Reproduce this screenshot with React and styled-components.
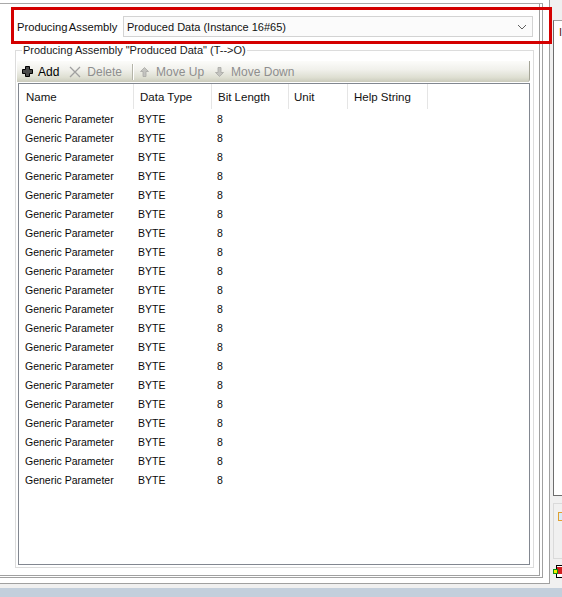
import React from "react";
import styled, { createGlobalStyle } from "styled-components";

const GlobalStyle = createGlobalStyle`
  html, body { margin: 0; padding: 0; background: #ffffff; }
  body { font-family: "Liberation Sans", Arial, sans-serif; color: #000; }
  * { box-sizing: border-box; }
`;

const Screen = styled.div`
  position: relative;
  width: 562px;
  height: 597px;
  overflow: hidden;
  display: flex;
  flex-direction: column;
  background: #fff;
`;

const Workspace = styled.div`
  display: flex;
  height: 588px;
  background: #f0f0f0;
`;

const OuterFrame = styled.div`
  width: 550px;
  height: 584px;
  background: #fff;
  border-right: 1px solid #a0a0a0;
  border-bottom: 1px solid #a0a0a0;
  padding: 3px 6px 5px 0;
`;

const MiddleFrame = styled.div`
  height: 100%;
  border-top: 1px solid #a9a9a9;
  border-right: 1px solid #a0a0a0;
  border-bottom: 1px solid #a0a0a0;
  padding: 0 2px 1px 0;
`;

const InnerFrame = styled.div`
  height: 100%;
  border-right: 1px solid #a0a0a0;
  border-bottom: 1px solid #a0a0a0;
  display: flex;
  flex-direction: column;
`;

const TopRow = styled.div`
  display: flex;
  align-items: center;
  height: 21px;
  margin-top: 12px;
  padding: 0 6px 0 17px;
`;

const FieldLabel = styled.div`
  width: 106px;
  flex: none;
  font-size: 11.2px;
  word-spacing: -1px;
  color: #111;
  white-space: nowrap;
`;

const Combo = styled.div`
  flex: 1;
  height: 21px;
  display: flex;
  align-items: center;
  justify-content: space-between;
  border: 1px solid #d3d3d3;
  background: #fbfbfb;
  padding: 0 5px 0 3px;
  font-size: 11px;
  color: #111;
`;

const GroupBox = styled.div`
  flex: 1;
  margin: 13px 5px 7px 15px;
  border: 1px solid #dcdcdc;
  display: flex;
  flex-direction: column;
  padding: 0 3px 2px 1px;
`;

const Legend = styled.div`
  align-self: flex-start;
  margin: -8px 0 0 5px;
  padding: 0 1px;
  background: #fff;
  font-size: 11px;
  line-height: 15px;
  color: #1a1a1a;
  white-space: nowrap;
`;

const Toolbar = styled.div`
  margin-top: 3px;
  height: 21px;
  display: flex;
  align-items: center;
  padding-left: 5px;
  background: linear-gradient(#fcfcfa 0%, #f1f1ec 40%, #dedfd2 78%, #cbcbbc 100%);
  border-right: 1px solid #a4a497;
  border-bottom-right-radius: 3px;
  font-size: 12px;
`;

const ToolButton = styled.div`
  display: flex;
  align-items: center;
  gap: ${(p) => p.$gap}px;
  margin-right: ${(p) => p.$after}px;
  color: ${(p) => (p.$disabled ? "#8e8e8e" : "#000")};
  white-space: nowrap;
`;

const ToolSeparator = styled.div`
  width: 1px;
  height: 16px;
  background: #b4b4a8;
  box-shadow: 1px 0 0 #ffffff;
  margin-right: 7px;
`;

const List = styled.div`
  flex: 1;
  margin: 1px 0 0 1px;
  border: 1px solid #828790;
  background: #fff;
  display: flex;
  flex-direction: column;
`;

const columns = "115px 78px 77px 59px 80px";

const HeaderRow = styled.div`
  display: grid;
  grid-template-columns: ${columns};
  height: 25px;
`;

const HeaderCell = styled.div`
  display: flex;
  align-items: center;
  padding-left: ${(p) => p.$pad}px;
  border-right: 1px solid #e5e5e5;
  font-size: 11.5px;
  color: #111;
  white-space: nowrap;
`;

const Row = styled.div`
  display: grid;
  grid-template-columns: ${columns};
  height: 19px;
`;

const Cell = styled.div`
  display: flex;
  align-items: center;
  padding-left: ${(p) => p.$pad}px;
  font-size: 10.5px;
  color: #0a0a0a;
  white-space: nowrap;
`;

const SideStrip = styled.div`
  width: 12px;
  padding-left: 3px;
  display: flex;
  flex-direction: column;
`;

const SidePanel = styled.div`
  margin-top: 20px;
  height: 476px;
  background: #fff;
  border-left: 1px solid #6d6d6d;
  border-top: 1px solid #a0a0a0;
  border-bottom: 1px solid #6d6d6d;
  overflow: hidden;
  padding: 5px 0 0 5px;
  font-size: 11px;
  color: #5a1a00;
`;

const SideBox = styled.div`
  margin-top: 7px;
  height: 56px;
  background: #f0f0f0;
  border: 1px solid #dadada;
  border-right: none;
  padding: 3px 0 0 4px;
  overflow: hidden;
`;

const SideIcon = styled.div`
  margin-top: 6px;
  overflow: hidden;
`;

const StatusBand = styled.div`
  height: 9px;
  background: #c3cfdc;
`;

const Highlight = styled.div`
  position: absolute;
  left: 11px;
  top: 7px;
  width: 541px;
  height: 37px;
  border: 3px solid #d40000;
  pointer-events: none;
`;

const PlusIcon = () => (
  <svg width="11" height="11" viewBox="0 0 11 11">
    <path
      d="M3.5 0.5h4v3h3v4h-3v3h-4v-3h-3v-4h3z"
      fill="#4a4a4a"
      stroke="#000"
      strokeWidth="1"
    />
  </svg>
);

const CrossIcon = () => (
  <svg width="12" height="12" viewBox="0 0 12 12">
    <path d="M1 1L11 11M11 1L1 11" stroke="#a0a0a0" strokeWidth="1.3" fill="none" />
  </svg>
);

const UpIcon = () => (
  <svg width="9" height="10" viewBox="0 0 9 10">
    <path d="M4.5 0.5L8.5 4.5H6V9.5H3V4.5H0.5Z" fill="#c4c4c0" stroke="#a8a8a4" strokeWidth="0.8" />
  </svg>
);

const DownIcon = () => (
  <svg width="9" height="10" viewBox="0 0 9 10">
    <path d="M4.5 9.5L8.5 5.5H6V0.5H3V5.5H0.5Z" fill="#c4c4c0" stroke="#a8a8a4" strokeWidth="0.8" />
  </svg>
);

const Chevron = () => (
  <svg width="10" height="6" viewBox="0 0 10 6">
    <path d="M1 1L5 5L9 1" stroke="#606060" strokeWidth="1" fill="none" />
  </svg>
);

const rows = Array.from({ length: 20 }, () => ({
  name: "Generic Parameter",
  type: "BYTE",
  bits: "8",
}));

export default function App() {
  return (
    <>
      <GlobalStyle />
      <Screen>
        <Workspace>
          <OuterFrame>
            <MiddleFrame>
              <InnerFrame>
                <TopRow>
                  <FieldLabel>Producing Assembly</FieldLabel>
                  <Combo>
                    <span>Produced Data (Instance 16#65)</span>
                    <Chevron />
                  </Combo>
                </TopRow>
                <GroupBox>
                  <Legend>Producing Assembly "Produced Data" (T--&gt;O)</Legend>
                  <Toolbar>
                    <ToolButton $gap={5} $after={10}>
                      <PlusIcon />
                      <span>Add</span>
                    </ToolButton>
                    <ToolButton $gap={6} $after={10} $disabled>
                      <CrossIcon />
                      <span>Delete</span>
                    </ToolButton>
                    <ToolSeparator />
                    <ToolButton $gap={7} $after={11} $disabled>
                      <UpIcon />
                      <span>Move Up</span>
                    </ToolButton>
                    <ToolButton $gap={7} $after={0} $disabled>
                      <DownIcon />
                      <span>Move Down</span>
                    </ToolButton>
                  </Toolbar>
                  <List>
                    <HeaderRow>
                      <HeaderCell $pad={7}>Name</HeaderCell>
                      <HeaderCell $pad={6}>Data Type</HeaderCell>
                      <HeaderCell $pad={6}>Bit Length</HeaderCell>
                      <HeaderCell $pad={5}>Unit</HeaderCell>
                      <HeaderCell $pad={6}>Help String</HeaderCell>
                    </HeaderRow>
                    {rows.map((r, i) => (
                      <Row key={i}>
                        <Cell $pad={6}>{r.name}</Cell>
                        <Cell $pad={4}>{r.type}</Cell>
                        <Cell $pad={5}>{r.bits}</Cell>
                        <Cell $pad={5}></Cell>
                        <Cell $pad={5}></Cell>
                      </Row>
                    ))}
                  </List>
                </GroupBox>
              </InnerFrame>
            </MiddleFrame>
          </OuterFrame>
          <SideStrip>
            <SidePanel>I</SidePanel>
            <SideBox>
              <svg width="6" height="9" viewBox="0 0 6 9">
                <rect x="0.5" y="0.5" width="6" height="8" fill="#d8ecf8" stroke="#e0a030" />
              </svg>
            </SideBox>
            <SideIcon>
              <svg width="9" height="14" viewBox="0 0 9 14">
                <rect x="3.5" y="0.5" width="6" height="12" fill="#fff" stroke="#000" />
                <rect x="4" y="2" width="5" height="7" fill="#d02020" />
                <rect x="0.5" y="4.5" width="4" height="4" fill="#f0f000" stroke="#109010" />
              </svg>
            </SideIcon>
          </SideStrip>
        </Workspace>
        <StatusBand />
        <Highlight />
      </Screen>
    </>
  );
}
